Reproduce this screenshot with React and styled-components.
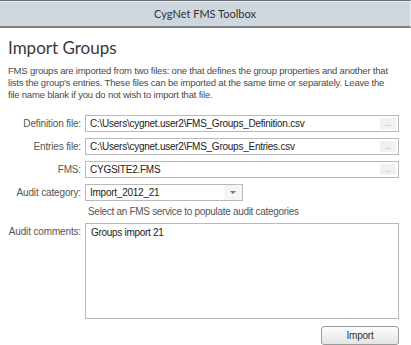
import React from "react";
import styled, { createGlobalStyle } from "styled-components";

const Global = createGlobalStyle`
  html, body { margin: 0; padding: 0; background: #fff; }
  body { font-family: "Liberation Sans", Arial, sans-serif; }
`;

const Window = styled.div`
  width: 411px;
  height: 345px;
  box-sizing: border-box;
  background: #fff;
  display: flex;
  flex-direction: column;
  overflow: hidden;
`;

const TitleBar = styled.div`
  height: 25px;
  flex-shrink: 0;
  border-top: 1px solid #6c7074;
  border-bottom: 2px solid #7d8186;
  border-right: 1px solid #e6ebef;
  box-shadow: inset 0 1px 0 #e8edf1;
  background: #cfd7de;
  display: flex;
  align-items: center;
  justify-content: center;
  font-family: Lato, "Open Sans", sans-serif;
  font-size: 11px;
  color: #333;
`;

const Body = styled.div`
  padding: 9px 12px 0 8px;
  display: flex;
  flex-direction: column;
`;

const Heading = styled.h1`
  margin: 0;
  font-family: Lato, "Open Sans", sans-serif;
  font-weight: 400;
  font-size: 17px;
  line-height: 22px;
  color: #3a3a3a;
`;

const Description = styled.p`
  margin: 6px 0 0 0;
  width: 383px;
  font-size: 9.5px;
  letter-spacing: -0.2px;
  line-height: 12px;
  color: #4a4a4a;
`;

const Form = styled.div`
  margin-top: 14px;
  display: grid;
  grid-template-columns: 73px 1fr;
  column-gap: 4px;
  row-gap: 6px;
  align-items: center;
`;

const Label = styled.label`
  text-align: right;
  font-size: 10px;
  letter-spacing: -0.15px;
  color: #555;
  white-space: nowrap;
  align-self: ${(p) => (p.$top ? "start" : "center")};
  padding-top: ${(p) => (p.$top ? "3px" : "0")};
`;

const Field = styled.div`
  height: 17px;
  box-sizing: border-box;
  border: 1px solid #b9b9b9;
  background: #fff;
  display: flex;
  align-items: center;
  padding-left: 4px;
  font-size: 10px;
  letter-spacing: -0.25px;
  color: #222;
  width: ${(p) => p.$width || "auto"};
`;

const FieldText = styled.span`
  flex: 1;
  white-space: nowrap;
  overflow: hidden;
`;

const Browse = styled.span`
  width: 16px;
  height: 11px;
  margin-right: 2px;
  background: #f1f1f1;
  color: #8a85a0;
  font-size: 7px;
  line-height: 7px;
  display: flex;
  align-items: center;
  justify-content: center;
  letter-spacing: 0.3px;
`;

const DropArrow = styled.span`
  width: 18px;
  align-self: stretch;
  background: #f5f5f5;
  display: flex;
  align-items: center;
  justify-content: center;
`;

const Hint = styled.div`
  grid-column: 2;
  font-size: 10px;
  letter-spacing: -0.3px;
  line-height: 10px;
  padding-left: 3px;
  color: #555;
`;

const CommentBox = styled.div`
  height: 96px;
  box-sizing: border-box;
  border: 1px solid #b9b9b9;
  padding: 3px 5px;
  font-size: 10px;
  letter-spacing: -0.3px;
  color: #222;
`;

const Actions = styled.div`
  display: flex;
  justify-content: flex-end;
  margin-top: 7px;
`;

const Button = styled.button`
  width: 78px;
  height: 19px;
  border: 1px solid #9a9a9a;
  border-radius: 3px;
  background: linear-gradient(#fdfdfd, #e4e4e4);
  font-family: "Liberation Sans", Arial, sans-serif;
  font-size: 10px;
  letter-spacing: -0.2px;
  color: #333;
  padding: 0;
`;

export default function App() {
  return (
    <>
      <Global />
      <Window>
        <TitleBar>CygNet FMS Toolbox</TitleBar>
        <Body>
          <Heading>Import Groups</Heading>
          <Description>
            FMS groups are imported from two files: one that defines the group properties and another that
            lists the group's entries. These files can be imported at the same time or separately. Leave the
            file name blank if you do not wish to import that file.
          </Description>
          <Form>
            <Label>Definition file:</Label>
            <Field>
              <FieldText>C:\Users\cygnet.user2\FMS_Groups_Definition.csv</FieldText>
              <Browse>...</Browse>
            </Field>
            <Label>Entries file:</Label>
            <Field>
              <FieldText>C:\Users\cygnet.user2\FMS_Groups_Entries.csv</FieldText>
              <Browse>...</Browse>
            </Field>
            <Label>FMS:</Label>
            <Field>
              <FieldText>CYGSITE2.FMS</FieldText>
              <Browse>...</Browse>
            </Field>
            <Label>Audit category:</Label>
            <Field $width="158px">
              <FieldText>Import_2012_21</FieldText>
              <DropArrow>
                <svg width="6" height="3" viewBox="0 0 6 3">
                  <path d="M0 0 L6 0 L3 3 Z" fill="#777" />
                </svg>
              </DropArrow>
            </Field>
            <Hint>Select an FMS service to populate audit categories</Hint>
            <Label $top>Audit comments:</Label>
            <CommentBox>Groups import 21</CommentBox>
          </Form>
          <Actions>
            <Button>Import</Button>
          </Actions>
        </Body>
      </Window>
    </>
  );
}
